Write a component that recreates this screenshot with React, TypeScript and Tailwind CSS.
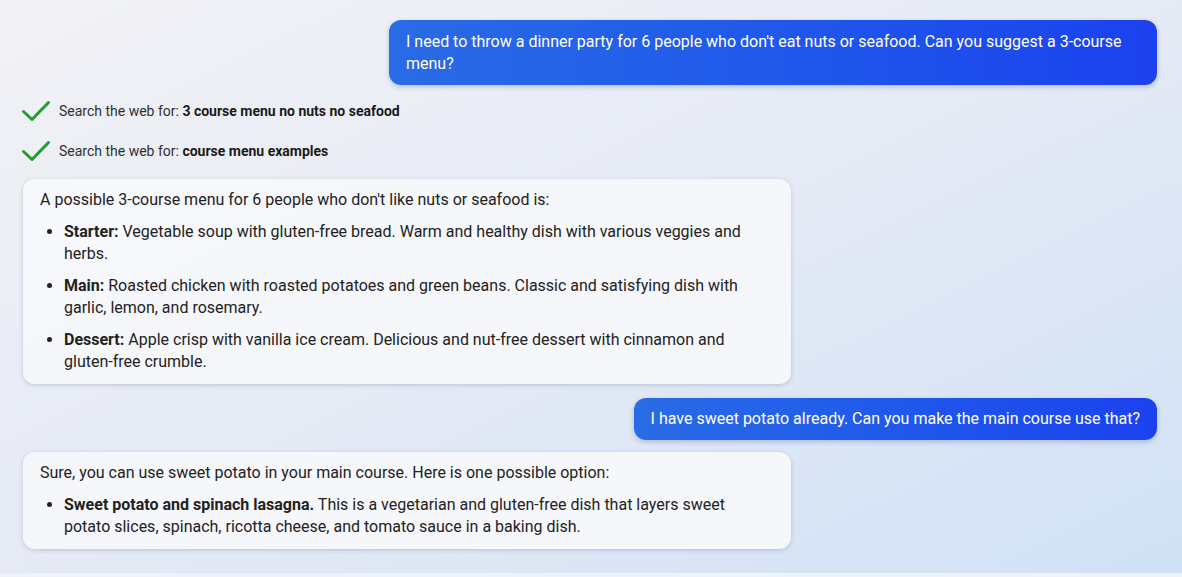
import React from 'react';

function Check() {
  return (
    <svg width="30" height="24" viewBox="0 0 30 24" className="shrink-0">
      <path d="M2.5 12.5 L11 20.5 L27.5 3.5" fill="none" stroke="#1f9e2b" strokeWidth="3" strokeLinecap="round" strokeLinejoin="round" />
    </svg>
  );
}

function SearchRow({ query, className = '' }: { query: string, className?: string }) {
  return (
    <div className={`flex items-center h-[24px] ${className}`}>
      <Check />
      <span className="ml-[8px] text-[14px] text-[#2e2e2e]">
        Search the web for: <b className="font-bold text-[#1a1a1a]">{query}</b>
      </span>
    </div>
  );
}

function UserBubble({ children, className = '' }: { children: React.ReactNode, className?: string }) {
  return (
    <div className={`self-end max-w-[768px] rounded-[12px] bg-gradient-to-r from-[#2a6be6] to-[#1c41ee] px-[17px] py-[10px] text-[16px] leading-[22px] text-white shadow-[0_2px_5px_rgba(30,60,140,0.25)] ${className}`}>
      {children}
    </div>
  );
}

function BotCard({ children, className = '' }: { children: React.ReactNode, className?: string }) {
  return (
    <div className={`w-[768px] rounded-[12px] bg-[#f7f8fb]/95 px-[17px] pt-[10px] pb-[11px] text-[16px] leading-[22px] text-[#222] shadow-[0_1px_4px_rgba(40,60,100,0.22)] ${className}`}>
      {children}
    </div>
  );
}

export default function App() {
  return (
    <div className="relative w-[1182px] h-[577px] overflow-hidden bg-gradient-to-br from-[#f2f2f6] via-[#e5eaf5] to-[#d0e1f5]" style={{ fontFamily: 'Roboto, "Noto Sans", sans-serif' }}>
      <div className="flex flex-col pl-[23px] pr-[25px] pt-[20px]">
        <UserBubble className="h-[65px] pt-[11px]">
          I need to throw a dinner party for 6 people who don't eat nuts or seafood. Can you suggest a 3-course menu?
        </UserBubble>

        <SearchRow className="mt-[14px] -ml-[2px]" query="3 course menu no nuts no seafood" />
        <SearchRow className="mt-[16px] -ml-[2px]" query="course menu examples" />

        <BotCard className="mt-[16px]">
          <p>A possible 3-course menu for 6 people who don't like nuts or seafood is:</p>
          <ul className="list-disc pl-[24px] mt-[10px] flex flex-col gap-[10px]">
            <li><b>Starter:</b> Vegetable soup with gluten-free bread. Warm and healthy dish with various veggies and herbs.</li>
            <li><b>Main:</b> Roasted chicken with roasted potatoes and green beans. Classic and satisfying dish with garlic, lemon, and rosemary.</li>
            <li><b>Dessert:</b> Apple crisp with vanilla ice cream. Delicious and nut-free dessert with cinnamon and gluten-free crumble.</li>
          </ul>
        </BotCard>

        <UserBubble className="mt-[14px]">
          I have sweet potato already. Can you make the main course use that?
        </UserBubble>

        <BotCard className="mt-[12px]">
          <p>Sure, you can use sweet potato in your main course. Here is one possible option:</p>
          <ul className="list-disc pl-[24px] mt-[10px]">
            <li><b>Sweet potato and spinach lasagna.</b> This is a vegetarian and gluten-free dish that layers sweet potato slices, spinach, ricotta cheese, and tomato sauce in a baking dish.</li>
          </ul>
        </BotCard>
      </div>
      <div className="absolute bottom-0 left-0 right-0 h-[4px] bg-[#eff2f8]" />
    </div>
  );
}
